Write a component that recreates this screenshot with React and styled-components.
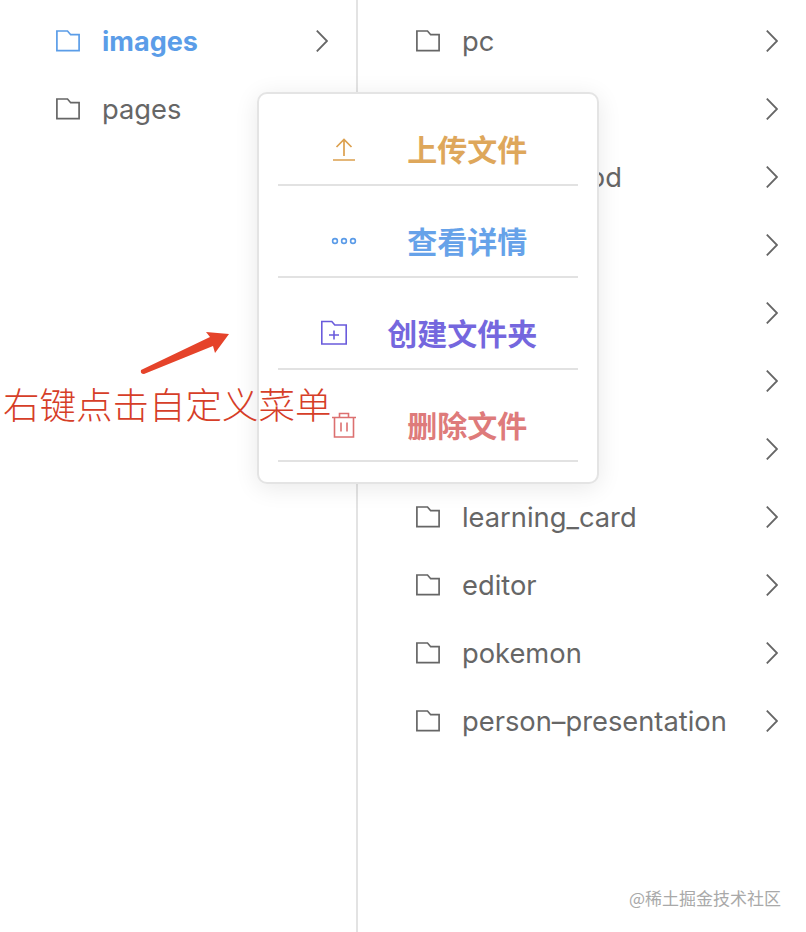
import React from 'react';
import styled, { createGlobalStyle } from 'styled-components';

const GlobalStyle = createGlobalStyle`
  html, body {
    margin: 0;
    padding: 0;
    background: #fff;
  }
  body {
    font-family: Inter, "Noto Sans CJK SC", sans-serif;
  }
`;

const Page = styled.div`
  position: relative;
  width: 806px;
  height: 932px;
  overflow: hidden;
  display: flex;
`;

const Column = styled.div`
  box-sizing: border-box;
  width: ${p => p.$width}px;
  height: 100%;
  padding: 7px 28px 0 ${p => p.$indent}px;
  border-right: ${p => (p.$divided ? '2px solid #e3e3e3' : 'none')};
`;

const Row = styled.div`
  display: flex;
  align-items: center;
  height: 68px;
  gap: 22px;
  color: ${p => (p.$active ? '#5b9de8' : '#666')};
`;

const Label = styled.span`
  flex: 1;
  font-size: ${p => (p.$active ? 27 : 27.3)}px;
  font-weight: ${p => (p.$active ? 700 : 400)};
  white-space: nowrap;
`;

const Menu = styled.div`
  position: absolute;
  top: 92px;
  left: 257px;
  box-sizing: border-box;
  width: 342px;
  height: 392px;
  padding: 0 19px;
  background: #fff;
  border: 2px solid #e4e4e4;
  border-radius: 10px;
  box-shadow: 0 4px 24px rgba(0, 0, 0, 0.09);
`;

const MenuItem = styled.div`
  display: flex;
  align-items: center;
  justify-content: space-evenly;
  height: 92px;
  padding: 20px 0 0 5px;
  box-sizing: border-box;
  border-bottom: 2px solid #e2e2e2;
  color: ${p => p.$color};
`;

const MenuIcon = styled.svg`
  width: 26px;
  height: 26px;
  margin-left: -3px;
  flex: none;
`;

const MenuText = styled.span`
  margin-top: -3px;
  font-family: "Noto Sans CJK SC", sans-serif;
  font-size: 30px;
  font-weight: 700;
  line-height: 40px;
  opacity: 0.92;
`;

const Note = styled.div`
  position: absolute;
  top: 379px;
  left: 3px;
  font-family: "Noto Sans CJK SC", sans-serif;
  font-size: 36.5px;
  line-height: 50px;
  font-weight: 300;
  color: #d63e28;
  white-space: nowrap;
`;

const Arrow = styled.svg`
  position: absolute;
  top: 325px;
  left: 135px;
`;

const Watermark = styled.div`
  position: absolute;
  right: 25px;
  top: 886px;
  font-family: "Noto Sans CJK SC", sans-serif;
  font-size: 17px;
  line-height: 24px;
  color: #a9a9a9;
`;

const Folder = () => (
  <svg width="24" height="22" viewBox="0 0 24 22" fill="none" stroke="currentColor" strokeWidth="1.7" style={{ flex: 'none' }}>
    <path d="M.9 1h10.600l3.200 3.700h8.400v16H.9z" />
  </svg>
);

const Chevron = () => (
  <svg width="12" height="22" viewBox="0 0 12 22" fill="none" stroke="#666" strokeWidth="1.8" style={{ flex: 'none' }}>
    <path d="M.8.6 11 11 .8 21.400" />
  </svg>
);

const Item = ({ name, active }) => (
  <Row $active={active}>
    <Folder />
    <Label $active={active}>{name}</Label>
    <Chevron />
  </Row>
);

const leftItems = ['images', 'pages'];
const rightItems = [
  'pc', 'mobile', 'course_food', 'common', 'assets', 'layout', 'home',
  'learning_card', 'editor', 'pokemon', 'person–presentation',
];

export default function App() {
  return (
    <Page>
      <GlobalStyle />
      <Column $width={358} $indent={56} $divided>
        {leftItems.map((name, i) => (
          <Item key={name} name={name} active={i === 0} />
        ))}
      </Column>
      <Column $width={448} $indent={58}>
        {rightItems.map(name => (
          <Item key={name} name={name} />
        ))}
      </Column>

      <Menu>
        <MenuItem $color="#dca04e">
          <MenuIcon viewBox="0 0 26 26" fill="none" stroke="currentColor" strokeWidth="1.7">
            <path d="M2 24h22M13 20V4M5.500 11 13 3.500l7.500 7.500" />
          </MenuIcon>
          <MenuText>上传文件</MenuText>
        </MenuItem>
        <MenuItem $color="#5a9be8">
          <MenuIcon viewBox="0 0 26 26" fill="none" stroke="currentColor" strokeWidth="1.6">
            <circle cx="4" cy="13" r="2.400" />
            <circle cx="13" cy="13" r="2.400" />
            <circle cx="22" cy="13" r="2.400" />
          </MenuIcon>
          <MenuText>查看详情</MenuText>
        </MenuItem>
        <MenuItem $color="#6a5bdc">
          <MenuIcon viewBox="0 0 26 26" fill="none" stroke="currentColor" strokeWidth="1.6">
            <path d="M.8 1.500h10l3 3.500h11.400v19H.8zM8 15h10M13 10.500v9" />
          </MenuIcon>
          <MenuText>创建文件夹</MenuText>
        </MenuItem>
        <MenuItem $color="#dc7070">
          <MenuIcon viewBox="0 0 26 26" fill="none" stroke="currentColor" strokeWidth="1.6">
            <path d="M1 5.500h24M8.500 5.500V1.500h9v4M3.500 5.500V25h19V5.500M10 10.500v9M16 10.500v9" />
          </MenuIcon>
          <MenuText>删除文件</MenuText>
        </MenuItem>
      </Menu>

      <Arrow width="100" height="52" viewBox="0 0 100 52">
        <path d="M6 45 75 12 71 7 94 9 80 28 78 21 9 49Q5 49 6 45z" fill="#e5432a" />
      </Arrow>
      <Note>右键点击自定义菜单</Note>
      <Watermark>@稀土掘金技术社区</Watermark>
    </Page>
  );
}
